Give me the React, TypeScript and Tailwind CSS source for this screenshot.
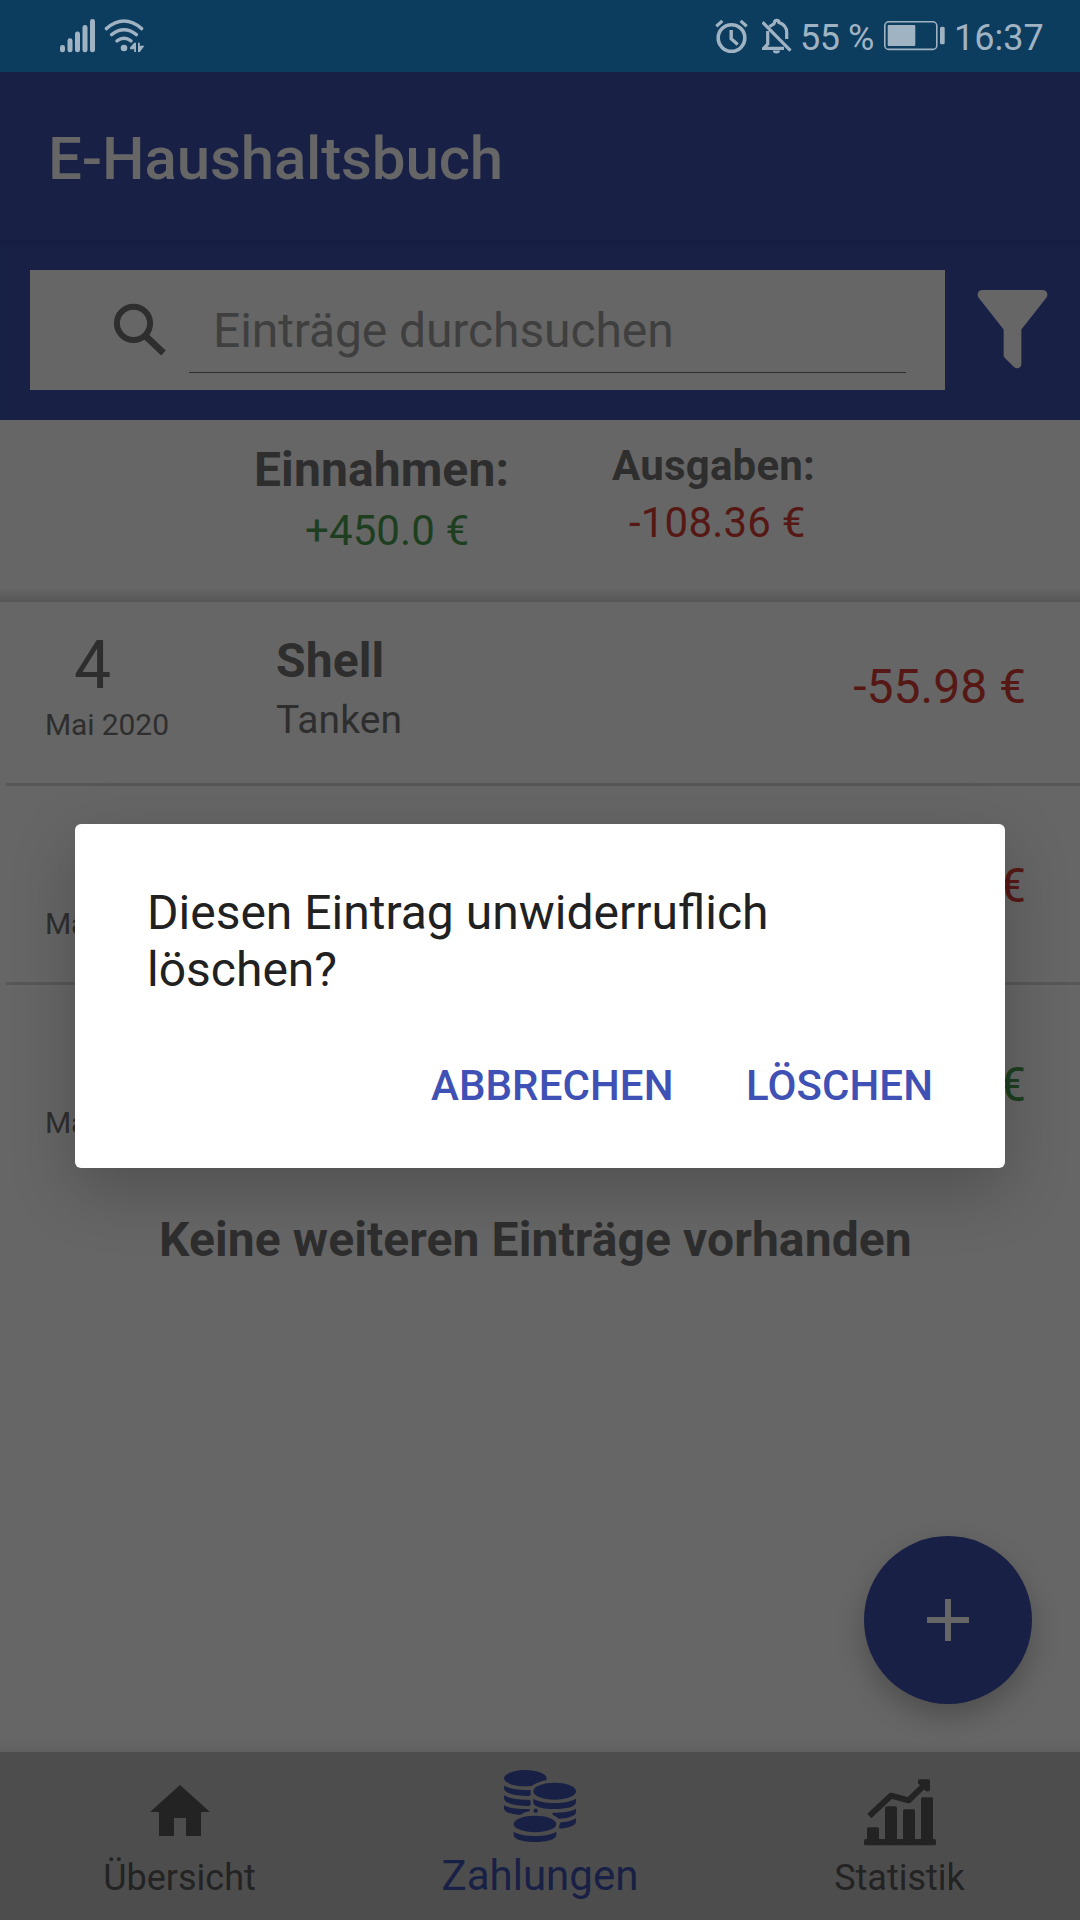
import React from "react";

function SignalIcon() {
  return (
    <svg width="36" height="34" viewBox="60 19 36 34" fill="#a0b3c3" className="shrink-0">
      <rect x="60" y="45" width="5" height="7.3" rx="2.4" />
      <rect x="67.5" y="38.3" width="5" height="14" rx="2.4" />
      <rect x="75" y="31.6" width="5" height="20.7" rx="2.4" />
      <rect x="82.5" y="25" width="5" height="27.3" rx="2.4" />
      <rect x="90" y="19" width="5" height="33.3" rx="2.4" />
    </svg>
  );
}

function WifiIcon() {
  return (
    <svg width="41" height="34" viewBox="104 19 41 34" fill="none" stroke="#a0b3c3" strokeWidth="3.4" strokeLinecap="round" className="shrink-0">
      <path d="M106.4 28.6Q124 13.6 141.6 28.6" />
      <path d="M111.6 34.6Q124 24.8 136.4 34.6" />
      <path d="M117 40.9Q124 35.8 131 40.9" />
      <circle cx="124" cy="48" r="3.3" fill="#a0b3c3" stroke="none" />
      <path d="M136 42.8V52H134.200V49.200H130V47.600L134.200 42.800Z" fill="#a0b3c3" stroke="none" />
      <path d="M138 42.8H139.8V45.8H144.5L139.8 52H138Z" fill="#a0b3c3" stroke="none" />
    </svg>
  );
}

function AlarmIcon() {
  return (
    <svg width="34" height="36" viewBox="715 18 34 36" fill="none" stroke="#a0b3c3" strokeWidth="3.6" className="shrink-0">
      <circle cx="731.5" cy="38" r="13.3" />
      <path d="M731.2 30V38.7L737.7 44.5" strokeWidth="3.4" />
      <path d="M716.3 26.3L722.4 20.9M746.7 26.3L740.6 20.9" strokeWidth="3.2" />
    </svg>
  );
}

function BellOffIcon() {
  return (
    <svg width="30" height="36" viewBox="762 18 30 36" fill="none" stroke="#a0b3c3" strokeWidth="3.2" className="shrink-0">
      <path d="M767.7 31V44L763.5 48.4H784" />
      <path d="M769.5 26.8C772 24.6 774.5 24.6 774.5 22.6A2.2 2.2 0 0 1 779 22.6C784.5 24.5 786.7 28 786.7 32.5V39" />
      <path d="M762.5 22.2L790.5 50.7" />
      <path d="M772.8 50.5H780A3.6 3 0 0 1 772.8 50.5Z" fill="#a0b3c3" stroke="none" />
    </svg>
  );
}

function BatteryIcon() {
  return (
    <svg width="61" height="30" viewBox="884 22 61 30" fill="#a0b3c3" className="shrink-0">
      <rect x="884.8" y="22.8" width="52" height="27.6" rx="4" fill="none" stroke="#a0b3c3" strokeWidth="1.6" />
      <rect x="887.7" y="26" width="27.6" height="21" rx="1" />
      <rect x="940" y="27.7" width="4.7" height="17.6" rx="1.5" />
    </svg>
  );
}

function SearchIcon() {
  return (
    <svg width="54" height="54" viewBox="0 0 54 54" fill="none" stroke="#2e2e2e" className="shrink-0">
      <circle cx="20.5" cy="20.3" r="16.6" strokeWidth="6" />
      <path d="M33 33.5L50.5 50" strokeWidth="6.6" />
      <path d="M31.5 31L34.5 34.5" strokeWidth="5" />
    </svg>
  );
}

function FunnelIcon() {
  return (
    <svg width="71" height="79" viewBox="0 0 72 80" preserveAspectRatio="none" fill="#666666">
      <path d="M5 0H67C71 0 72.5 4.5 70.5 7.5L45 40V75C45 79 40.5 80.5 37.5 78L28.500 69C27.5 68 27 67 27 66V40L1.5 7.5C-0.5 4.5 1 0 5 0Z" />
    </svg>
  );
}

function HomeIcon() {
  return (
    <svg width="72" height="72" viewBox="0 0 24 24" fill="#232323">
      <path d="M10 20v-6h4v6h5v-8h3L12 3 2 12h3v8z" />
    </svg>
  );
}

function CoinsIcon() {
  return (
    <svg width="72" height="72" viewBox="72 90 216 216" fill="#182046">
      <path d="M136 90C171 90 200 101 200 115L199 121C182 123 165 131 157 137Q147 139 136 139C101 139 72 128 72 115S101 90 136 90Z" />
      <path d="M72 137C88 147 118 150 149 150Q153 150 152 155V163Q152 168 147 168C108 168 72 160 72 145Z" />
      <path d="M72 166C88 176 118 179 147 179Q152 179 152 185V193Q152 198 147 198C108 198 72 190 72 175Z" />
      <path d="M72 196C88 205 118 208 147 207Q153 209 148 214C136 216 132 219 121 225C94 223 72 216 72 206Z" />
      <circle cx="167" cy="212" r="6.5" />
      <ellipse cx="224" cy="154" rx="64" ry="25.5" />
      <path d="M160 176C184 193 262 193 288 176V186C288 201 258 207 224 207S160 200 160 188Z" />
      <path d="M288 206V216C288 228 264 236 236 236C231 231 225 229 219 225Q213 218 222 218C248 218 276 214 288 206Z" />
      <path d="M288 235V245C288 256 268 263 241 266Q237 266 237 261L240 250Q240 247 246 247C262 246 278 242 288 235Z" />
      <ellipse cx="165" cy="252" rx="64" ry="24.5" />
      <path d="M101 275C126 292 204 292 229 275V285C229 299 199 306 165 306S101 299 101 285Z" />
    </svg>
  );
}

function ChartIcon() {
  return (
    <svg width="72" height="67" viewBox="102 116 216 201" fill="#232323">
      <rect x="102" y="296" width="216" height="19" rx="5" />
      <path d="M111 300V266Q111 261 116 261H142Q147 261 147 266V300Z" />
      <path d="M165 300V203Q165 198 170 198H196Q201 198 201 203V300Z" />
      <path d="M219 300V212Q219 207 224 207H250Q255 207 255 212V300Z" />
      <path d="M273 300V176Q273 171 278 171H304Q309 171 309 176V300Z" />
      <path d="M118 227L183 166L236 180L278 139" fill="none" stroke="#232323" strokeWidth="18" strokeLinejoin="round" />
      <path d="M269 117H295Q300 117 300 122V148Q300 153 295 153H288L264 129V122Q264 117 269 117Z" />
    </svg>
  );
}

function StatusBar() {
  return (
    <div className="flex h-[72px] items-center bg-[#0c3c5e] pl-[60px] text-[36px] leading-[36px] text-[#a0b3c3]">
      <SignalIcon />
      <div className="ml-2"><WifiIcon /></div>
      <div className="ml-auto flex h-[72px] items-center">
        <AlarmIcon />
        <div className="ml-[13px]"><BellOffIcon /></div>
        <span className="ml-2 w-[82px] pt-[3px] tracking-[-0.5px] whitespace-nowrap">55 %</span>
        <div className="ml-[2px]"><BatteryIcon /></div>
        <span className="ml-[9px] w-[126px] pt-[3px]">16:37</span>
      </div>
    </div>
  );
}

type Entry = { day: string; title: string; category: string; amount: string; income?: boolean };

const entries: Entry[] = [
  { day: "4", title: "Shell", category: "Tanken", amount: "-55.98 €" },
  { day: "", title: "", category: "", amount: "€" },
  { day: "", title: "", category: "", amount: "€", income: true },
];

function EntryRow({ entry, first, last }: { entry: Entry; first: boolean; last: boolean }) {
  return (
    <div className={first ? "flex h-[184px] flex-col justify-end" : "flex h-[199px] flex-col justify-end"}>
      <div className="flex h-[181px] text-[#2e2e2e]">
        <div className="w-[276px] pt-[30px]">
          <div className="h-[68px] pl-[74px] text-[66px] leading-[68px]">{entry.day}</div>
          <div className="mt-[10px] pl-[45px] text-[30px] leading-[30px] tracking-[-0.1px] whitespace-nowrap">Mai 2020</div>
        </div>
        <div className="flex-1 pt-[35px]">
          <div className="h-[48px] text-[48px] leading-[48px] font-bold tracking-[0.1px]">{entry.title}</div>
          <div className="mt-[15px] h-10 text-[39px] leading-10 tracking-[0.1px]">{entry.category}</div>
        </div>
        <div className={entry.income ? "pt-[61px] pr-[54px] text-[48px] leading-[48px] text-[#1d3f1f]" : "pt-[61px] pr-[54px] text-[48px] leading-[48px] text-[#561815]"}>
          {entry.amount}
        </div>
      </div>
      <div className={last ? "h-[3px]" : "ml-1.5 h-[3px] bg-[#575757]"} />
    </div>
  );
}

export default function App() {
  return (
    <div className="relative flex h-[1920px] w-[1080px] flex-col overflow-hidden bg-[#666666] font-['Roboto',sans-serif]">
      <StatusBar />
      <header className="h-[168px] bg-[#182046] pt-[57px] pl-12">
        <h1 className="text-[60px] leading-[60px] font-medium tracking-[-0.13px] text-[#666666]">E-Haushaltsbuch</h1>
      </header>

      <div className="flex h-[180px] bg-[#182046] pt-[30px] pl-[30px] shadow-[inset_0_6px_5px_-4px_#161d40]">
        <div className="flex h-[120px] w-[915px] bg-[#666666] pt-[33px] pl-[83px]">
          <SearchIcon />
          <div className="ml-[22px] h-[70px] w-[717px] border-b border-[#2e2e2e] pl-6 text-[48px] leading-[56px] tracking-[-0.1px] text-[#3f3f3f]">
            Einträge durchsuchen
          </div>
        </div>
        <div className="ml-8 pt-5"><FunnelIcon /></div>
      </div>

      <section className="flex h-[182px] shrink-0 flex-col text-[#2e2e2e]">
        <div className="flex flex-1">
          <div className="ml-[254px] w-[358px] pt-[26px]">
            <div className="text-[48px] leading-[48px] font-bold tracking-[0.1px]">Einnahmen:</div>
            <div className="mt-[16px] pl-[51px] text-[42px] leading-[42px] tracking-[0.1px] text-[#1d3f1f]">+450.0 €</div>
          </div>
          <div className="pt-[25px]">
            <div className="text-[42px] leading-[42px] font-bold tracking-[0.2px]">Ausgaben:</div>
            <div className="mt-[15px] pl-[17px] text-[42px] leading-[42px] tracking-[0.2px] text-[#561815]">-108.36 €</div>
          </div>
        </div>
        <div className="h-[14px] bg-linear-to-b from-[#666666] to-[#575757]" />
      </section>

      <main className="flex-1">
        {entries.map((entry, i) => (
          <EntryRow key={i} entry={entry} first={i === 0} last={i === entries.length - 1} />
        ))}
        <p className="pt-[32px] pl-[159px] text-[48px] leading-[48px] font-bold tracking-[0.09px] whitespace-nowrap text-[#2e2e2e]">
          Keine weiteren Einträge vorhanden
        </p>
      </main>

      <button className="absolute top-[1536px] left-[864px] flex size-[168px] items-center justify-center rounded-full bg-[#182046] shadow-[0_12px_28px_rgba(0,0,0,0.24)]">
        <svg width="42" height="42" viewBox="0 0 42 42" fill="#666666">
          <path d="M18 0h6v18h18v6H24v18h-6V24H0v-6h18z" />
        </svg>
      </button>

      <div className="h-3 bg-linear-to-b from-[#666666] to-[#606060]" />
      <nav className="grid h-[168px] shrink-0 grid-cols-3 bg-[#4d4d4d] text-[36px] leading-[36px] text-[#232323]">
        <div className="flex flex-col items-center pt-6">
          <HomeIcon />
          <span className="mt-[12px] mr-px h-9">Übersicht</span>
        </div>
        <div className="flex flex-col items-center pt-[18px] text-[42px] leading-[42px] text-[#182046]">
          <CoinsIcon />
          <span className="mt-[13px]">Zahlungen</span>
        </div>
        <div className="flex flex-col items-center pt-[27px]">
          <ChartIcon />
          <span className="mt-[14px] mr-px">Statistik</span>
        </div>
      </nav>

      <div role="dialog" className="absolute top-[824px] left-[75px] flex h-[344px] w-[930px] flex-col rounded-md bg-white pt-[60px] shadow-[0_22px_64px_rgba(0,0,0,0.22)]">
        <p className="w-[720px] pl-[72px] text-[48px] leading-[57px] text-[#212121]">
          Diesen Eintrag unwiderruflich löschen?
        </p>
        <div className="mt-[67px] flex pl-[356px] text-[42px] leading-[42px] font-medium tracking-[0.08px] text-[#3f51b5]">
          <button className="w-[315px] text-left">ABBRECHEN</button>
          <button>LÖSCHEN</button>
        </div>
      </div>
    </div>
  );
}
